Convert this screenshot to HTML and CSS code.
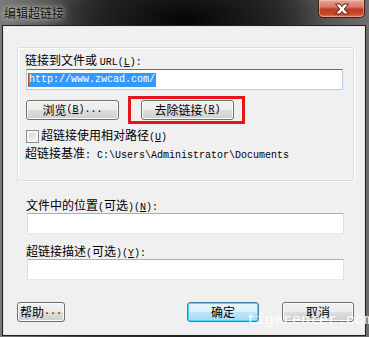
FILE: index.html
```html
<!DOCTYPE html>
<html>
<head>
<meta charset="utf-8">
<link rel="stylesheet" href="styles.css">
</head>
<body>
<div class="window">
  <div class="titlebar">
    <span class="title">编辑超链接</span>
    <div class="close">
      <svg width="20" height="12" viewBox="0 0 20 12"><path d="M3.5 1 H8 L10 3.6 L12 1 H16.5 L12.3 6 L16.5 11 H12 L10 8.4 L8 11 H3.5 L7.7 6 Z" fill="#fff" stroke="#5a1a10" stroke-width="1" stroke-linejoin="round"/></svg>
    </div>
  </div>
  <div class="client">
    <div class="group">
      <div class="label">链接到文件或 <span class="m">URL(<u>L</u>):</span></div>
      <div class="input focus"><span class="caret"></span><span class="sel m">http://www.zwcad.com/</span></div>
      <div class="btnrow">
        <div class="btn browse">浏览<span class="m">(<u>B</u>)...</span></div>
        <div class="redbox"><div class="btn remove">去除链接<span class="m">(<u>R</u>)</span></div></div>
      </div>
      <div class="check"><span class="box"></span><span>超链接使用相对路径<span class="m">(<u>U</u>)</span></span></div>
      <div class="base">超链接基准<span class="m">: C:\Users\Administrator\Documents</span></div>
    </div>
    <div class="label outer l1">文件中的位置<span class="m">(</span>可选<span class="m">)(<u>N</u>):</span></div>
    <div class="input plain"></div>
    <div class="label outer l2">超链接描述<span class="m">(</span>可选<span class="m">)(<u>Y</u>):</span></div>
    <div class="input plain"></div>
    <div class="bottom">
      <div class="btn help">帮助<span class="m">...</span></div>
      <div class="btn ok">确定</div>
      <div class="btn cancel">取消</div>
    </div>
  </div>
  <div class="watermark">tigerenter.com</div>
</div>
</body>
</html>
```

FILE: styles.css
```css
* { box-sizing: border-box; }
html, body { margin: 0; padding: 0; }
body {
  width: 369px;
  height: 337px;
  overflow: hidden;
  font-family: "Noto Sans CJK SC", "Noto Sans", sans-serif;
  font-size: 12px;
  color: #000;
}
.window {
  position: relative;
  width: 369px;
  height: 337px;
  display: flex;
  flex-direction: column;
  background:
    radial-gradient(ellipse 140px 60px at 50% 20px, #050505 0%, #1a1a1a 45%, rgba(60,60,60,0) 100%),
    linear-gradient(to right, #7a7a7a 0%, #3a3a3a 25%, #202020 50%, #3a3a3a 75%, #6e6e6e 100%);
  background-color: #2a2a2a;
}
.titlebar {
  height: 26px;
  flex: none;
  display: flex;
  align-items: flex-start;
  justify-content: space-between;
}
.title {
  margin: 5px 0 0 4px;
  line-height: 15px;
  color: #111;
  text-shadow: 0 0 4px rgba(230,230,230,.9), 0 0 8px rgba(200,200,200,.8);
}
.close {
  width: 47px;
  height: 18px;
  margin-right: 4px;
  border: 1px solid #4a1a12;
  border-top: none;
  border-radius: 0 0 5px 5px;
  background: linear-gradient(to bottom, #e4a699 0%, #d67b68 40%, #c23a20 55%, #c7462a 80%, #d87a55 100%);
  box-shadow: inset 0 0 0 1px rgba(255,200,190,.5);
  display: flex;
  align-items: center;
  justify-content: center;
}
.client {
  flex: 1;
  margin: 0 4px 2px 3px;
  background: #f0f0f0;
  border: 1px solid #e6e6e6;
  outline: 1px solid #202020;
  display: flex;
  flex-direction: column;
}
.m {
  font-family: "Liberation Mono", monospace;
  font-size: 10px;
}
.group {
  margin: 20px 10px 0 13px;
  height: 134px;
  border: 1px solid #d5dfe5;
  border-radius: 2px;
  box-shadow: inset 1px 1px 0 #fff, 1px 1px 0 #fff;
  display: flex;
  flex-direction: column;
}
.label {
  line-height: 14px;
  height: 14px;
  white-space: nowrap;
}
.group .label { margin: 5px 0 0 7px; }
.input {
  height: 21px;
  width: 317px;
  background: #fff;
  border: 1px solid #dbdfe6;
  border-top-color: #abadb3;
  border-bottom-color: #e3e9ef;
  border-radius: 1px;
  display: flex;
  align-items: center;
}
.group .input { margin: 2px 0 0 8px; }
.input.focus {
  border-color: #b5cfe7;
  border-top-color: #3d7bad;
}
.caret {
  width: 1px;
  height: 14px;
  background: #c05000;
  margin-left: 1px;
}
.sel {
  background: #3399ff;
  color: #fff;
  line-height: 14px;
  height: 14px;
  padding-right: 1px;
}
.btnrow {
  margin: 6px 0 0 8px;
  height: 28px;
  display: flex;
  align-items: flex-start;
}
.btn {
  height: 20px;
  border: 1px solid #707070;
  border-radius: 3px;
  background: linear-gradient(to bottom, #f2f2f2 0%, #ebebeb 50%, #dddddd 51%, #cfcfcf 100%);
  box-shadow: inset 0 0 0 1px #fcfcfc;
  display: flex;
  align-items: center;
  justify-content: center;
  line-height: 14px;
  white-space: nowrap;
}
.browse { width: 93px; margin-top: 4px; }
.redbox {
  margin-left: 9px;
  width: 117px;
  height: 28px;
  border: 3px solid #e8141c;
  padding: 1px 7px 0 10px;
}
.remove { width: 93px; }
.check {
  margin: 5px 0 0 8px;
  height: 14px;
  line-height: 14px;
  display: flex;
  align-items: center;
  gap: 2px;
}
.box {
  width: 13px;
  height: 13px;
  border: 1px solid #8e8f8f;
  background: linear-gradient(135deg, #cbcfd5 0%, #e6e8ea 60%, #f4f4f4 100%);
  box-shadow: inset 0 0 0 2px #f4f4f4;
}
.base {
  margin: 3px 0 0 7px;
  line-height: 14px;
  white-space: nowrap;
}
.outer { margin-left: 22px; }
.l1 { margin-top: 17px; }
.l2 { margin-top: 10px; }
.client > .input { margin: 1px 0 0 23px; }
.bottom {
  margin: 22px 10px 0 13px;
  display: flex;
  gap: 23px;
}
.help { width: 48px; justify-content: flex-start; padding-left: 2px; }
.ok {
  width: 72px;
  margin-left: auto;
  border-color: #3c7fb1;
  background: linear-gradient(to bottom, #eaf6fd 0%, #d9f0fc 50%, #bee6fd 51%, #a7d9f5 100%);
  box-shadow: inset 0 0 0 1px #48d6fb;
}
.cancel { width: 72px; }
.watermark {
  position: absolute;
  left: 247px;
  top: 313px;
  font-family: "Liberation Mono", monospace;
  font-size: 15px;
  line-height: 15px;
  color: rgba(255,255,255,.95);
  white-space: nowrap;
}
```
